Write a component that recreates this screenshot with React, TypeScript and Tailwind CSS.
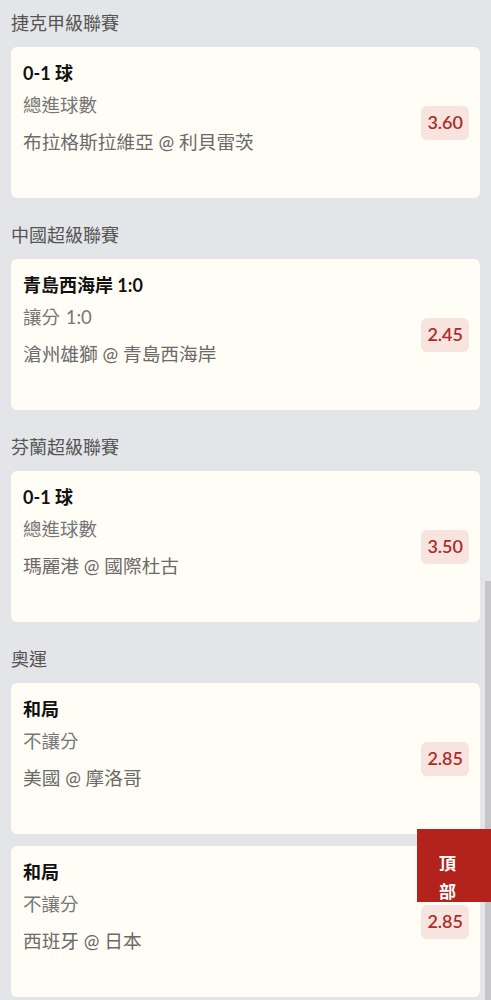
const bets = [
  { league: '捷克甲級聯賽', title: '0-1 球', market: '總進球數', teams: '布拉格斯拉維亞 @ 利貝雷茨', odds: '3.60' },
  { league: '中國超級聯賽', title: '青島西海岸 1:0', market: '讓分 1:0', teams: '滄州雄獅 @ 青島西海岸', odds: '2.45' },
  { league: '芬蘭超級聯賽', title: '0-1 球', market: '總進球數', teams: '瑪麗港 @ 國際杜古', odds: '3.50' },
  { league: '奧運', title: '和局', market: '不讓分', teams: '美國 @ 摩洛哥', odds: '2.85' },
  { league: '', title: '和局', market: '不讓分', teams: '西班牙 @ 日本', odds: '2.85' },
];

function BetCard({ title, market, teams, odds }: { title: string; market: string; teams: string; odds: string }) {
  return (
    <div className="h-[151px] rounded-md bg-[#fffdf5] flex items-center justify-between pl-[12px] pr-[11px]">
      <div className="self-start pt-[14px]">
        <div className="text-[18px] leading-6 font-bold text-[#111]">{title}</div>
        <div className="mt-2 text-[18.5px] leading-6 text-[#777] [word-spacing:1px]">{market}</div>
        <div className="mt-[13px] text-[18.7px] leading-6 text-[#6a6a6a]">{teams}</div>
      </div>
      <div className="rounded-md bg-[#f7e4df] px-[6px] h-[34px] flex items-center text-[18px] font-semibold text-[#b02a2a]">
        {odds}
      </div>
    </div>
  );
}

export default function App() {
  return (
    <div
      className="relative min-h-[1000px] bg-[#e4e5e8] px-[11px] pt-[11px]"
      style={{ fontFamily: 'Lato, "Noto Sans CJK TC", sans-serif' }}
    >
      {bets.map((b, i) => {
        const next = bets[i + 1];
        return (
          <div key={i} className={next && !next.league ? 'mb-3' : 'mb-[25px]'}>
            {b.league && (
              <div className="text-[18px] leading-6 text-[#555] mb-3">{b.league}</div>
            )}
            <BetCard title={b.title} market={b.market} teams={b.teams} odds={b.odds} />
          </div>
        );
      })}

      {/* scrollbar thumb */}
      <div className="absolute left-[485px] top-[581px] w-[6px] h-[419px] bg-[#c6c6c8]" />

      {/* back to top */}
      <div className="absolute left-[417px] top-[829px] w-[74px] h-[73px] bg-[#b3231c] overflow-hidden pl-[22px] pt-[21px]">
        <div className="text-[17px] leading-[28px] font-bold text-white">頂</div>
        <div className="text-[17px] leading-[28px] font-bold text-white">部</div>
      </div>
    </div>
  );
}
